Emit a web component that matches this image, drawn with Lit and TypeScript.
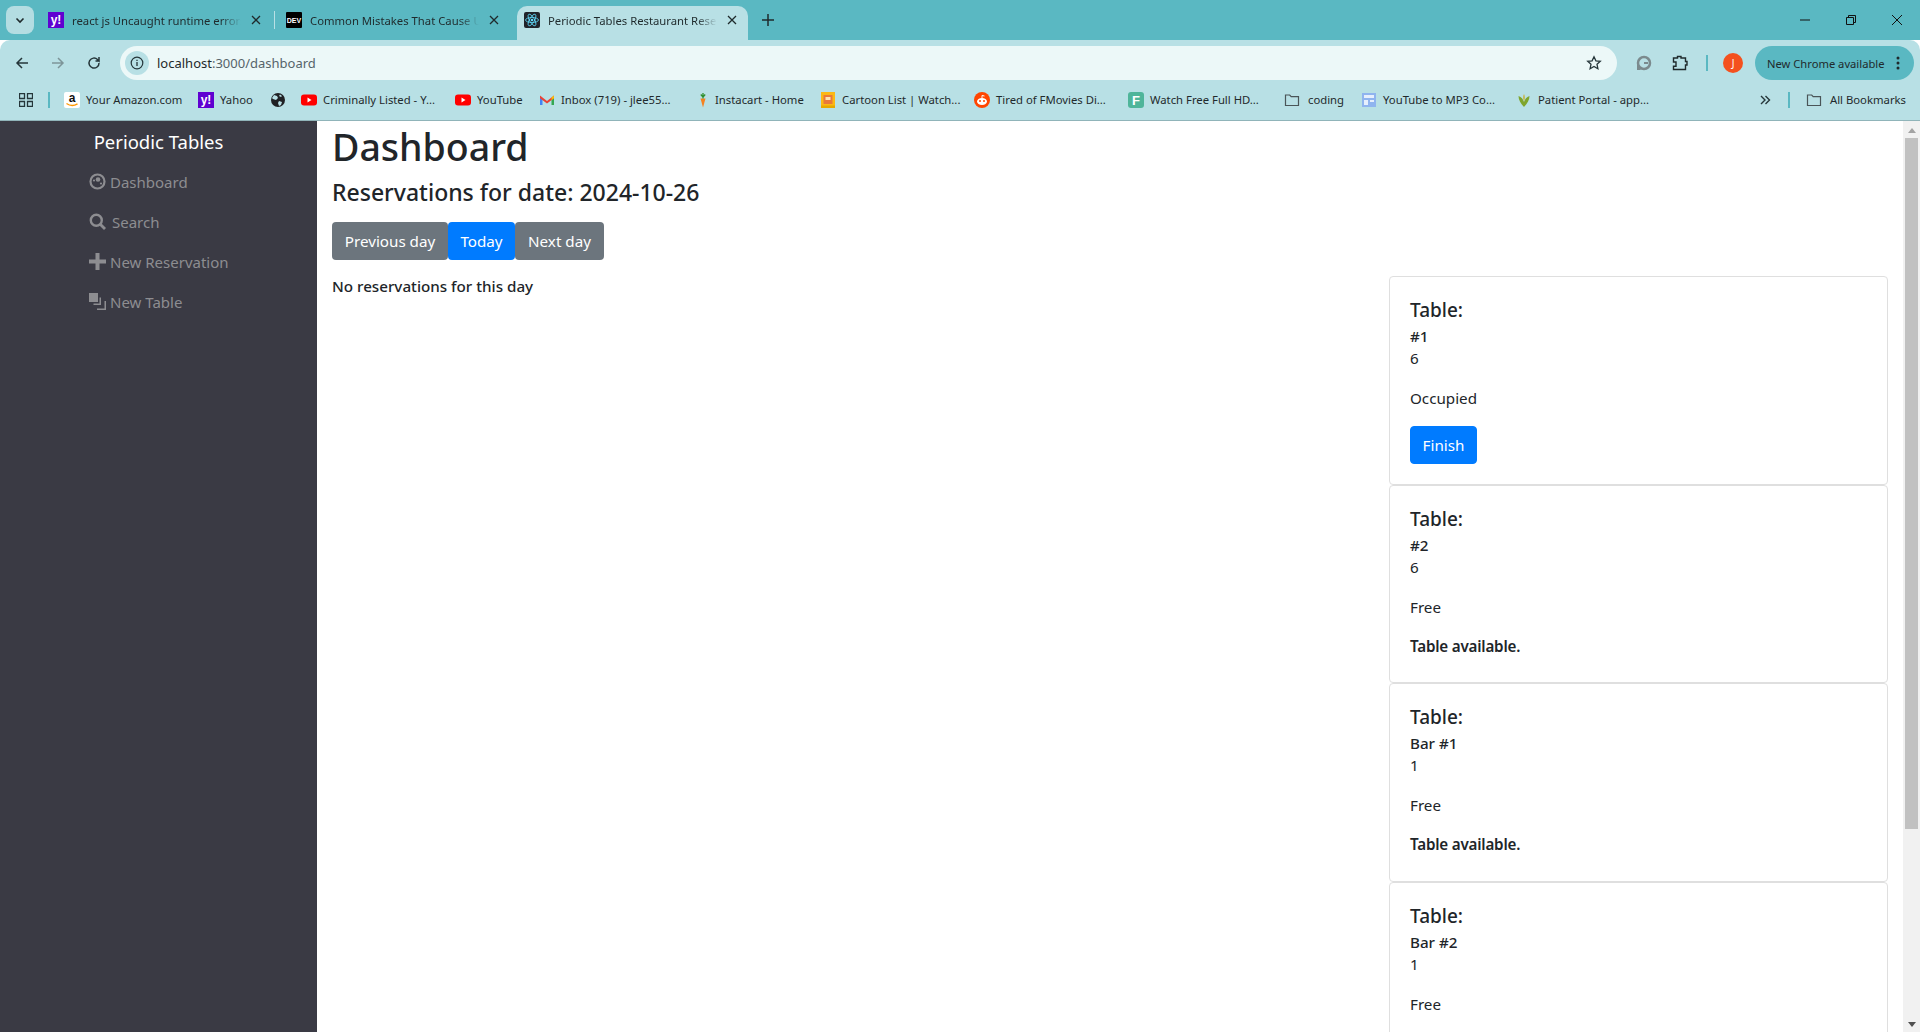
import { LitElement, html, css, svg, nothing } from 'lit';
import { customElement, property } from 'lit/decorators.js';

const UI_FONT = css`"Noto Sans", "Open Sans", sans-serif`;

const logoText = (text: string, x: number, y: number, size: number, fill: string) =>
  svg`<text x=${x} y=${y} font-size=${size} font-weight="700" text-anchor="middle" fill=${fill} font-family="Liberation Sans, sans-serif">${text}</text>`;

const yahoo = html`<svg viewBox="0 0 16 16" width="16" height="16"><rect width="16" height="16" fill="#5f01d1"/>${logoText('y!', 8, 12, 12, '#fff')}</svg>`;
const dev = html`<svg viewBox="0 0 16 16" width="16" height="16"><rect width="16" height="16" rx="1" fill="#000"/>${logoText('DEV', 8, 10.5, 7, '#fff')}</svg>`;
const react = html`<svg viewBox="0 0 16 16" width="16" height="16"><rect width="16" height="16" rx="2" fill="#20232a"/><g fill="none" stroke="#61dafb" stroke-width=".8"><ellipse cx="8" cy="8" rx="6.5" ry="2.5"/><ellipse cx="8" cy="8" rx="6.5" ry="2.5" transform="rotate(60 8 8)"/><ellipse cx="8" cy="8" rx="6.5" ry="2.5" transform="rotate(120 8 8)"/></g><circle cx="8" cy="8" r="1.3" fill="#61dafb"/></svg>`;
const amazon = html`<svg viewBox="0 0 16 16" width="16" height="16"><rect width="16" height="16" rx="2" fill="#fff"/>${logoText('a', 8, 10, 12, '#111')}<path d="M2.5 11.5c3.5 2.5 7.5 2.5 11 .3" fill="none" stroke="#f90" stroke-width="1.4"/></svg>`;
const globe = html`<svg viewBox="0 0 16 16" width="16" height="16"><circle cx="8" cy="8" r="7" fill="#202124"/><path d="M4 3l3 1 1 2-2 2-3-1-1-1zM9 9l3 1-1 3-2 1-1-3zM10 2.5l2 1.5-1 1-2-1z" fill="#b8e0e5"/></svg>`;
const youtube = html`<svg viewBox="0 0 16 16" width="16" height="16"><rect x="0" y="2.5" width="16" height="11" rx="3" fill="#f00"/><path d="M6.5 5.5v5l4-2.5z" fill="#fff"/></svg>`;
const gmail = html`<svg viewBox="0 0 16 16" width="16" height="16"><path d="M1 4v9h2.5V7z" fill="#4285f4"/><path d="M15 4v9h-2.5V7z" fill="#34a853"/><path d="M1 3.5l7 5.5 7-5.5v2.7L8 11.5 1 6.2z" fill="#ea4335"/><path d="M12.5 5.5L15 3.5v2.7l-2.5 2z" fill="#fbbc04"/></svg>`;
const carrot = html`<svg viewBox="0 0 16 16" width="16" height="16"><path d="M5.5 6.5h5L8 15.5z" fill="#f58220"/><path d="M8 6.5V1M8 5L5.8 2.5M8 5l2.2-2.5" stroke="#2f8f2f" stroke-width="1.3" fill="none"/></svg>`;
const cartoon = html`<svg viewBox="0 0 16 16" width="16" height="16"><rect x="1" width="14" height="16" fill="#fcb813"/><rect x="3.5" y="3" width="9" height="9" fill="#e9793a"/><rect x="5.5" y="5" width="5" height="3" fill="#fde3b0"/><rect x="1" y="13.5" width="14" height="2.5" fill="#e6a800"/></svg>`;
const reddit = html`<svg viewBox="0 0 16 16" width="16" height="16"><circle cx="8" cy="8" r="8" fill="#ff4500"/><ellipse cx="8" cy="9.5" rx="5" ry="3.5" fill="#fff"/><circle cx="6" cy="9" r="1" fill="#ff4500"/><circle cx="10" cy="9" r="1" fill="#ff4500"/><path d="M8 6V3.5l2.5.5" stroke="#fff" fill="none"/></svg>`;
const fmovies = html`<svg viewBox="0 0 16 16" width="16" height="16"><rect width="16" height="16" rx="3" fill="#4fb59a"/>${logoText('F', 8, 13, 13, '#fff')}</svg>`;
const folder = html`<svg viewBox="0 0 16 16" width="16" height="16"><path d="M1.5 3h4.2l1.5 1.7h7.3v8.8h-13z" fill="none" stroke="#4a5558" stroke-width="1.2"/></svg>`;
const ytmp3 = html`<svg viewBox="0 0 16 16" width="16" height="16"><rect x="1" y="1" width="14" height="14" fill="#8fb4ef"/><rect x="3" y="3" width="10" height="3" fill="#e6effd"/><rect x="3" y="8" width="4" height="5" fill="#e6effd"/><rect x="9" y="8" width="4" height="2" fill="#e6effd"/></svg>`;
const patient = html`<svg viewBox="0 0 16 16" width="16" height="16"><path d="M8 15C4.5 11 2.5 8 2.5 4c3 1 4.5 3 5.5 6 1-3 2.5-5 5.5-6 0 4-2 7-5.5 11z" fill="#7fa52c"/><path d="M8 9C6.8 6.5 7 4 8 2c1 2 1.2 4.5 0 7z" fill="#c9b13a"/></svg>`;

// w is the distance to the next bookmark's icon
const bookmarks = [
  { icon: amazon, label: 'Your Amazon.com', w: 134 },
  { icon: yahoo, label: 'Yahoo', w: 72 },
  { icon: globe, label: '', w: 31 },
  { icon: youtube, label: 'Criminally Listed - Y...', w: 154 },
  { icon: youtube, label: 'YouTube', w: 84 },
  { icon: gmail, label: 'Inbox (719) - jlee55...', w: 156 },
  { icon: carrot, label: 'Instacart - Home', w: 125, gap: 4 },
  { icon: cartoon, label: 'Cartoon List | Watch...', w: 154 },
  { icon: reddit, label: 'Tired of FMovies Di...', w: 154 },
  { icon: fmovies, label: 'Watch Free Full HD...', w: 156 },
  { icon: folder, label: 'coding', w: 77, gap: 8 },
  { icon: ytmp3, label: 'YouTube to MP3 Co...', w: 155 },
  { icon: patient, label: 'Patient Portal - app...', w: 150 },
];

const tabs = [
  { icon: yahoo, label: 'react js Uncaught runtime errors', active: false },
  { icon: dev, label: 'Common Mistakes That Cause Unresponsive', active: false },
  { icon: react, label: 'Periodic Tables Restaurant Reservations', active: true },
];

@customElement('browser-chrome')
export class BrowserChrome extends LitElement {
  static styles = css`
    :host {
      display: block;
      flex-shrink: 0;
      font-family: ${UI_FONT};
      color: #1f2a2c;
    }
    svg { display: block; flex-shrink: 0; }
    .strip {
      display: flex;
      align-items: flex-end;
      height: 40px;
      background: #5ab8c2;
      padding-left: 6px;
    }
    .tab-search {
      width: 28px;
      height: 28px;
      margin: 0 0 6px 0;
      border-radius: 8px;
      background: #b4dde2;
      display: flex;
      align-items: center;
      justify-content: center;
    }
    .tabs { display: flex; align-items: flex-end; margin-left: 7px; }
    .tab {
      position: relative;
      display: flex;
      align-items: center;
      width: 238px;
      height: 34px;
      padding: 0 18px 6px 7px;
      box-sizing: border-box;
      font-size: 11.3px;
    }
    .tab.active {
      width: 231px;
      padding-right: 11px;
      background: #b8e0e5;
      border-radius: 10px 10px 0 0;
    }
    .tab + .tab::before {
      content: '';
      position: absolute;
      left: -5px;
      top: 5px;
      width: 1px;
      height: 18px;
      background: #b8e0e5;
    }
    .tab.active::before { display: none; }
    .tab .title {
      flex: 1;
      margin-left: 8px;
      overflow: hidden;
      white-space: nowrap;
      -webkit-mask-image: linear-gradient(to right, #000 88%, transparent);
      mask-image: linear-gradient(to right, #000 88%, transparent);
    }
    .tab .close { margin-left: 10px; }
    .new-tab { margin: 0 0 14px 14px; }
    .win { margin-left: auto; display: flex; align-items: center; gap: 36px; height: 40px; padding-right: 18px; }
    .bar {
      display: flex;
      align-items: center;
      height: 40px;
      background: #b8e0e5;
      border-radius: 10px 10px 0 0;
      padding: 6px 6px 0 14px;
      box-sizing: border-box;
    }
    .nav { display: flex; align-items: center; gap: 20px; margin-right: 18px; }
    .omni {
      flex: 1;
      height: 34px;
      border-radius: 17px;
      background: #ecf8f8;
      display: flex;
      align-items: center;
      padding: 0 15px 0 5px;
      font-size: 13px;
    }
    .site-info {
      width: 24px;
      height: 24px;
      border-radius: 50%;
      background: #b8e0e5;
      display: flex;
      align-items: center;
      justify-content: center;
      margin-right: 8px;
    }
    .host { color: #1f2a2c; }
    .path { color: #56646a; }
    .star { margin-left: auto; }
    .tools { display: flex; align-items: center; margin-left: 19px; }
    .grammarly { margin-right: 20px; }
    .puzzle { margin-right: 18px; }
    .vsep { width: 2px; height: 16px; background: #5ab8c2; flex-shrink: 0; }
    .avatar {
      width: 20px;
      height: 20px;
      border-radius: 50%;
      background: #f4511e;
      color: #fff;
      font-size: 10px;
      display: flex;
      align-items: center;
      justify-content: center;
      margin: 0 12px 0 15px;
    }
    .update {
      display: flex;
      align-items: center;
      height: 34px;
      width: 159px;
      box-sizing: border-box;
      border-radius: 17px;
      background: #5ab8c2;
      padding: 0 14px 0 12px;
      font-size: 11.2px;
      white-space: nowrap;
      justify-content: space-between;
    }
    .marks {
      display: flex;
      align-items: center;
      height: 41px;
      padding: 0 14px 1px 19px;
      box-sizing: border-box;
      background: #b8e0e5;
      border-bottom: 1px solid #90b4b9;
      font-size: 11.3px;
    }
    .apps { margin-right: 15px; }
    .marks > .vsep:first-of-type { margin-right: 14px; }
    .mark { display: flex; align-items: center; gap: 6px; white-space: nowrap; overflow: hidden; flex-shrink: 0; }
    .more { margin-left: auto; margin-right: 17px; }
    .all { display: flex; align-items: center; gap: 8px; margin-left: 16px; white-space: nowrap; }
  `;

  render() {
    return html`
      <div class="strip">
        <div class="tab-search">
          <svg viewBox="0 0 12 12" width="12" height="12"><path d="M2.5 4.5L6 8l3.5-3.5" fill="none" stroke="#1f2a2c" stroke-width="1.6"/></svg>
        </div>
        <div class="tabs">
          ${tabs.map(t => html`
            <div class="tab ${t.active ? 'active' : ''}">
              ${t.icon}
              <span class="title">${t.label}</span>
              <svg class="close" viewBox="0 0 10 10" width="10" height="10"><path d="M1 1l8 8M9 1l-8 8" stroke="#1f2a2c" stroke-width="1.3"/></svg>
            </div>
          `)}
        </div>
        <svg class="new-tab" viewBox="0 0 12 12" width="12" height="12"><path d="M6 0v12M0 6h12" stroke="#1f2a2c" stroke-width="1.5"/></svg>
        <div class="win">
          <svg viewBox="0 0 10 10" width="10" height="10"><path d="M0 5h10" stroke="#111" stroke-width="1"/></svg>
          <svg viewBox="0 0 10 10" width="10" height="10"><path d="M.5 2.5h7v7h-7zM2.500 2.500v-2h7v7h-2" fill="none" stroke="#111"/></svg>
          <svg viewBox="0 0 10 10" width="10" height="10"><path d="M0 0l10 10M10 0L0 10" stroke="#111"/></svg>
        </div>
      </div>
      <div class="bar">
        <div class="nav">
          <svg viewBox="0 0 16 16" width="16" height="16"><path d="M14 8H3M8 3L3 8l5 5" fill="none" stroke="#25363a" stroke-width="1.5"/></svg>
          <svg viewBox="0 0 16 16" width="16" height="16"><path d="M2 8h11M8 3l5 5-5 5" fill="none" stroke="#7d9599" stroke-width="1.5"/></svg>
          <svg viewBox="0 0 16 16" width="16" height="16"><path d="M13 8a5 5 0 1 1-1.5-3.500L13 6V2M13 6H9.500" fill="none" stroke="#25363a" stroke-width="1.5"/></svg>
        </div>
        <div class="omni">
          <div class="site-info">
            <svg viewBox="0 0 14 14" width="14" height="14"><circle cx="7" cy="7" r="5.8" fill="none" stroke="#25363a" stroke-width="1.2"/><path d="M7 6v4M7 3.8v1.2" stroke="#25363a" stroke-width="1.3"/></svg>
          </div>
          <span class="host">localhost</span><span class="path">:3000/dashboard</span>
          <svg class="star" viewBox="0 0 16 16" width="16" height="16"><path d="M8 1.8l1.9 4 4.4.5-3.300 3 .9 4.400L8 11.500l-3.900 2.200.9-4.400-3.300-3 4.400-.5z" fill="none" stroke="#25363a" stroke-width="1.3"/></svg>
        </div>
        <div class="tools">
          <svg class="grammarly" viewBox="0 0 16 16" width="16" height="16"><circle cx="8" cy="8" r="6" fill="none" stroke="#7b8a8d" stroke-width="2.5"/><path d="M8 8h4" stroke="#7b8a8d" stroke-width="2"/><path d="M1 15V9l4 6z" fill="#7b8a8d"/></svg>
          <svg class="puzzle" viewBox="0 0 16 16" width="16" height="16"><path d="M1.5 3h4V1.500h3.500V3h4.500v3.500H15V10h-1.500v4.500H1.500v-3.300H4V7H1.500z" fill="none" stroke="#1f2a2c" stroke-width="1.4"/></svg>
          <div class="vsep"></div>
          <div class="avatar">J</div>
          <div class="update">
            <span>New Chrome available</span>
            <svg viewBox="0 0 4 14" width="4" height="14"><circle cx="2" cy="2" r="1.5" fill="#1f2a2c"/><circle cx="2" cy="7" r="1.5" fill="#1f2a2c"/><circle cx="2" cy="12" r="1.5" fill="#1f2a2c"/></svg>
          </div>
        </div>
      </div>
      <div class="marks">
        <svg class="apps" viewBox="0 0 14 14" width="14" height="14"><path d="M.5.5h5v5h-5zM8.500.5h5v5h-5zM.5 8.500h5v5h-5zM8.500 8.500h5v5h-5z" fill="none" stroke="#25363a" stroke-width="1.3"/></svg>
        <div class="vsep"></div>
        ${bookmarks.map(b => html`
          <div class="mark" style="width:${b.w}px;${b.gap ? `gap:${b.gap}px` : ''}">${b.icon}${b.label ? html`<span>${b.label}</span>` : nothing}</div>
        `)}
        <svg class="more" viewBox="0 0 12 12" width="12" height="12"><path d="M2 2l4 4-4 4M6.500 2l4 4-4 4" fill="none" stroke="#25363a" stroke-width="1.4"/></svg>
        <div class="vsep"></div>
        <div class="all">${folder}<span>All Bookmarks</span></div>
      </div>
    `;
  }
}

const navIcons = {
  dashboard: svg`<circle cx="8.5" cy="8.5" r="7" fill="none" stroke="currentColor" stroke-width="2.2"/><circle cx="9" cy="6.5" r="2.3" fill="currentColor"/><circle cx="5" cy="7.5" r="1.1" fill="currentColor"/><circle cx="12" cy="10.5" r="1.1" fill="currentColor"/>`,
  search: svg`<circle cx="7.3" cy="7.3" r="5.5" fill="none" stroke="currentColor" stroke-width="2.4"/><path d="M11 11l5 5" stroke="currentColor" stroke-width="2.8"/>`,
  plus: svg`<path d="M6.5 0h4v6.5H17v4h-6.500V17h-4v-6.500H0v-4h6.500z" fill="currentColor"/>`,
  table: svg`<path d="M0 0h9v9H0z" fill="currentColor"/><path d="M10.5 4.5V10.500H4.500V12h7.500V4.500zM15.500 8v7.500H8V17h9V8z" fill="currentColor"/>`,
};

const links = [
  { icon: navIcons.dashboard, label: 'Dashboard', gap: 4 },
  { icon: navIcons.search, label: 'Search', gap: 6 },
  { icon: navIcons.plus, label: 'New Reservation', gap: 4 },
  { icon: navIcons.table, label: 'New Table', gap: 4 },
];

@customElement('side-nav')
export class SideNav extends LitElement {
  static styles = css`
    :host {
      display: block;
      width: 317px;
      flex-shrink: 0;
      background: #3a3a44;
      font-family: ${UI_FONT};
    }
    .brand {
      color: #fff;
      font-size: 18.5px;
      height: 36px;
      line-height: 36px;
      text-align: center;
      margin-top: 3px;
    }
    ul { list-style: none; margin: 0; padding: 2px 0 0 89px; }
    li {
      display: flex;
      align-items: center;
      height: 40px;
      color: #8d8d91;
      font-size: 15px;
    }
    svg { width: 17px; height: 17px; display: block; margin-top: -2px; }
  `;

  render() {
    return html`
      <div class="brand">Periodic Tables</div>
      <ul>
        ${links.map(l => html`
          <li style="gap:${l.gap}px"><svg viewBox="0 0 17 17">${l.icon}</svg>${l.label}</li>
        `)}
      </ul>
    `;
  }
}

@customElement('table-card')
export class TableCard extends LitElement {
  @property() name = '';
  @property() seats = '';
  @property() status = '';

  static styles = css`
    :host {
      display: block;
      box-sizing: border-box;
      border: 1px solid #dfdfdf;
      border-radius: 4px;
      padding: 20px;
      background: #fff;
      color: #212529;
    }
    h5 { margin: 0 0 4px; font-size: 19px; font-weight: 500; line-height: 26px; }
    h6 { margin: 0; font-size: 15.2px; font-weight: 500; line-height: 19px; }
    p { margin: 0; font-size: 15.2px; line-height: 24px; }
    .seats { margin-bottom: 16px; }
    .status { margin-bottom: 15px; }
    .occupied { margin-bottom: 16px; }
    .free { margin-bottom: 4.4px; font-weight: 600; letter-spacing: -.2px; }
    button {
      font: inherit;
      font-size: 15.2px;
      color: #fff;
      background: #007bff;
      border: 1px solid #007bff;
      border-radius: 4px;
      height: 38px;
      width: 67px;
      padding: 0;
      display: block;
    }
  `;

  render() {
    const occupied = this.status === 'Occupied';
    return html`
      <h5>Table:</h5>
      <h6>${this.name}</h6>
      <p class="seats">${this.seats}</p>
      <p class="status ${occupied ? 'occupied' : ''}">${this.status}</p>
      ${occupied ? html`<button>Finish</button>` : html`<p class="free">Table available.</p>`}
    `;
  }
}

@customElement('app-root')
export class AppRoot extends LitElement {
  static styles = css`
    :host {
      display: flex;
      flex-direction: column;
      height: 1032px;
      overflow: hidden;
      font-family: ${UI_FONT};
    }
    .page { flex: 1; min-height: 0; display: flex; }
    main {
      flex: 1;
      min-width: 0;
      padding: 2px 15px 0 15px;
      color: #212529;
      overflow: hidden;
    }
    h1 { margin: 0 0 7px; font-size: 37.5px; font-weight: 500; line-height: 48px; }
    h4 { margin: 0 0 15px; font-size: 23px; font-weight: 500; line-height: 29px; }
    .btns { display: flex; margin-bottom: 16px; }
    .btn {
      font: inherit;
      font-size: 15.2px;
      color: #fff;
      background: #6c757d;
      border: 0;
      border-radius: 4px;
      height: 38px;
      padding: 0;
    }
    .btn.primary { background: #007bff; }
    .cols { display: flex; justify-content: space-between; }
    .empty { margin: -2px 0 0; font-size: 15.2px; font-weight: 500; line-height: 24px; }
    .tables { width: 499px; }
    .scrollbar {
      width: 17px;
      flex-shrink: 0;
      background: #f1f1f1;
      display: flex;
      flex-direction: column;
      align-items: center;
    }
    .arrow { width: 0; height: 0; border-left: 4px solid transparent; border-right: 4px solid transparent; }
    .arrow.up { border-bottom: 5px solid #a3a3a3; margin-top: 7px; }
    .arrow.down { border-top: 5px solid #505050; margin: auto 0 5px; }
    .thumb { width: 13px; height: 691px; background: #c1c1c1; margin-top: 5px; }
  `;

  render() {
    return html`
      <browser-chrome></browser-chrome>
      <div class="page">
        <side-nav></side-nav>
        <main>
          <h1>Dashboard</h1>
          <h4>Reservations for date: 2024-10-26</h4>
          <div class="btns">
            <button class="btn" style="width:116px">Previous day</button>
            <button class="btn primary" style="width:67px">Today</button>
            <button class="btn" style="width:89px">Next day</button>
          </div>
          <div class="cols">
            <p class="empty">No reservations for this day</p>
            <div class="tables">
              <table-card name="#1" seats="6" status="Occupied"></table-card>
              <table-card name="#2" seats="6" status="Free"></table-card>
              <table-card name="Bar #1" seats="1" status="Free"></table-card>
              <table-card name="Bar #2" seats="1" status="Free"></table-card>
            </div>
          </div>
        </main>
        <div class="scrollbar">
          <div class="arrow up"></div>
          <div class="thumb"></div>
          <div class="arrow down"></div>
        </div>
      </div>
    `;
  }
}
